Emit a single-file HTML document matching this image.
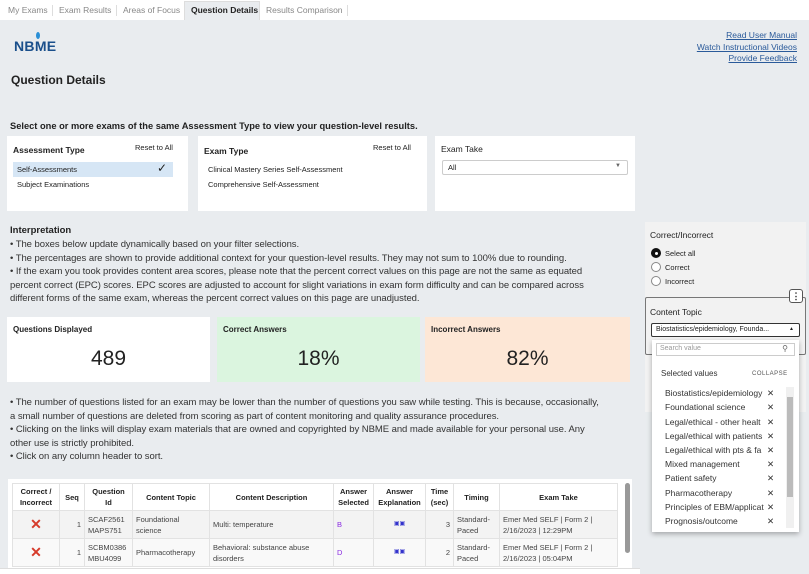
<!DOCTYPE html>
<html><head><meta charset="utf-8"><style>
*{box-sizing:border-box;margin:0;padding:0}
body{width:809px;height:574px;overflow:hidden;background:#e9ecef;font-family:"Liberation Sans",sans-serif;color:#222;position:relative;font-size:9px}
.a{position:absolute;white-space:nowrap}
.tabs{position:absolute;left:0;top:0;width:809px;height:20px;background:#fff}
.tab{position:absolute;top:5px;font-size:8.5px;color:#888}
.sep{position:absolute;top:5px;width:1px;height:11px;background:#ddd}
.box{position:absolute;background:#fff}
a{color:#2a5a9a;text-decoration:underline}
table{border-collapse:collapse;font-size:7.5px;table-layout:fixed}
td,th{border:1px solid #e2e2e2;padding:2px 3px;vertical-align:middle;overflow:hidden}
th{font-weight:bold;text-align:center;height:27px;line-height:11px}
td{height:28px;line-height:11px;color:#444}
.x{color:#d63b2b;font-size:14px;font-weight:bold;text-align:center}
.li{position:absolute;left:665px;font-size:8.5px;color:#333;white-space:nowrap}
.li span{position:absolute;left:102px}
.txt{font-size:9.5px;line-height:13.5px;color:#333;letter-spacing:-0.05px}
</style></head><body>
<div class="tabs">
<div class="tab" style="left:8px">My Exams</div><div class="sep" style="left:52px"></div>
<div class="tab" style="left:59px">Exam Results</div><div class="sep" style="left:116px"></div>
<div class="tab" style="left:123px">Areas of Focus</div>
<div style="position:absolute;left:184px;top:1px;width:76px;height:19px;background:#e9ecef;border:1px solid #ddd;border-bottom:none"></div>
<div class="tab" style="left:191px;color:#222;font-weight:bold">Question Details</div>
<div class="tab" style="left:266px">Results Comparison</div><div class="sep" style="left:347px"></div>
</div>
<div class="a" style="left:14px;top:38px;font-size:14px;font-weight:bold;color:#1a4f8b;letter-spacing:0.3px">NBME</div>
<div class="a" style="left:36px;top:32px;width:4px;height:7px;background:#2a8fd6;border-radius:50%"></div>
<div class="a" style="right:12px;top:30px;font-size:8.5px;text-align:right;line-height:11.5px"><a>Read User Manual</a><br><a>Watch Instructional Videos</a><br><a>Provide Feedback</a></div>
<div class="a" style="left:11px;top:73px;font-size:12px;font-weight:bold">Question Details</div>
<div class="a" style="left:10px;top:121px;font-size:9.3px;font-weight:bold">Select one or more exams of the same Assessment Type to view your question-level results.</div>

<div class="box" style="left:7px;top:136px;width:181px;height:75px">
<div class="a" style="left:6px;top:9px;font-weight:bold;font-size:8.5px">Assessment Type</div>
<div class="a" style="left:128px;top:7px;font-size:7.5px">Reset to All</div>
<div class="a" style="left:6px;top:26px;width:160px;height:15px;background:#d6e6f5"></div>
<div class="a" style="left:10px;top:29px;font-size:7.5px">Self-Assessments</div>
<div class="a" style="left:150px;top:25px;font-size:12px">✓</div>
<div class="a" style="left:10px;top:44px;font-size:7.5px">Subject Examinations</div>
</div>
<div class="box" style="left:198px;top:136px;width:229px;height:75px">
<div class="a" style="left:6px;top:10px;font-weight:bold;font-size:8.5px">Exam Type</div>
<div class="a" style="left:175px;top:7px;font-size:7.5px">Reset to All</div>
<div class="a" style="left:10px;top:29px;font-size:7.5px">Clinical Mastery Series Self-Assessment</div>
<div class="a" style="left:10px;top:44px;font-size:7.5px">Comprehensive Self-Assessment</div>
</div>
<div class="box" style="left:435px;top:136px;width:200px;height:75px">
<div class="a" style="left:6px;top:8px;font-size:8.5px">Exam Take</div>
<div class="a" style="left:7px;top:24px;width:186px;height:15px;border:1px solid #ccc;border-radius:2px;font-size:7.5px;padding:2px 5px">All<span style="position:absolute;right:6px;top:2px;font-size:6px;color:#666">▼</span></div>
</div>

<div class="a" style="left:10px;top:225px;font-weight:bold;font-size:9.5px">Interpretation</div>
<div class="a txt" style="left:10px;top:238px">• The boxes below update dynamically based on your filter selections.<br>• The percentages are shown to provide additional context for your question-level results. They may not sum to 100% due to rounding.<br>• If the exam you took provides content area scores, please note that the percent correct values on this page are not the same as equated<br>percent correct (EPC) scores. EPC scores are adjusted to account for slight variations in exam form difficulty and can be compared across<br>different forms of the same exam, whereas the percent correct values on this page are unadjusted.</div>

<div class="box" style="left:7px;top:317px;width:203px;height:65px"><div class="a" style="left:6px;top:8px;font-size:8px;font-weight:bold">Questions Displayed</div><div class="a" style="left:0;width:203px;text-align:center;top:30px;font-size:21px">489</div></div>
<div class="box" style="left:217px;top:317px;width:203px;height:65px;background:#dbf5df"><div class="a" style="left:6px;top:8px;font-size:8px;font-weight:bold">Correct Answers</div><div class="a" style="left:0;width:203px;text-align:center;top:30px;font-size:21px">18%</div></div>
<div class="box" style="left:425px;top:317px;width:205px;height:65px;background:#fde7d6"><div class="a" style="left:6px;top:8px;font-size:8px;font-weight:bold">Incorrect Answers</div><div class="a" style="left:0;width:205px;text-align:center;top:30px;font-size:21px">82%</div></div>

<div class="a txt" style="left:10px;top:396px">• The number of questions listed for an exam may be lower than the number of questions you saw while testing. This is because, occasionally,<br>a small number of questions are deleted from scoring as part of content monitoring and quality assurance procedures.<br>• Clicking on the links will display exam materials that are owned and copyrighted by NBME and made available for your personal use. Any<br>other use is strictly prohibited.<br>• Click on any column header to sort.</div>

<div class="box" style="left:8px;top:479px;width:624px;height:95px;padding:4px 0 0 4px">
<table style="width:606px">
<colgroup><col style="width:47px"><col style="width:25px"><col style="width:48px"><col style="width:77px"><col style="width:124px"><col style="width:40px"><col style="width:52px"><col style="width:28px"><col style="width:46px"><col></colgroup>
<tr><th>Correct /<br>Incorrect</th><th>Seq</th><th>Question<br>Id</th><th>Content Topic</th><th>Content Description</th><th>Answer<br>Selected</th><th>Answer<br>Explanation</th><th>Time<br>(sec)</th><th>Timing</th><th>Exam Take</th></tr>
<tr style="background:#f3f3f3"><td class="x">✕</td><td style="text-align:right">1</td><td>SCAF2561<br>MAPS751</td><td>Foundational<br>science</td><td>Multi: temperature</td><td style="color:#8a2be2">B</td><td style="text-align:center;color:#33c;font-size:6px">▣▣</td><td style="text-align:right">3</td><td>Standard-<br>Paced</td><td>Emer Med SELF | Form 2 |<br>2/16/2023 | 12:29PM</td></tr>
<tr style="background:#f9f9f9"><td class="x">✕</td><td style="text-align:right">1</td><td>SCBM0386<br>MBU4099</td><td>Pharmacotherapy</td><td>Behavioral: substance abuse<br>disorders</td><td style="color:#8a2be2">D</td><td style="text-align:center;color:#33c;font-size:6px">▣▣</td><td style="text-align:right">2</td><td>Standard-<br>Paced</td><td>Emer Med SELF | Form 2 |<br>2/16/2023 | 05:04PM</td></tr>
</table>
<div class="a" style="left:617px;top:4px;width:5px;height:70px;background:#999;border-radius:3px"></div>
</div>
<div class="a" style="left:0;top:568px;width:640px;height:6px;background:#fff;border-top:1px solid #ddd"></div>

<div class="a" style="left:645px;top:222px;width:161px;height:190px;background:#f2f2f2"></div>
<div class="a" style="left:650px;top:230px;font-size:8.5px">Correct/Incorrect</div>
<div class="a" style="left:651px;top:248px;width:10px;height:10px;border-radius:50%;background:#111"><div style="position:absolute;left:3.5px;top:3.5px;width:3px;height:3px;background:#fff;border-radius:50%"></div></div>
<div class="a" style="left:665px;top:249px;font-size:7.5px">Select all</div>
<div class="a" style="left:651px;top:262px;width:10px;height:10px;border-radius:50%;border:1px solid #888;background:#fff"></div>
<div class="a" style="left:665px;top:263px;font-size:7.5px">Correct</div>
<div class="a" style="left:651px;top:276px;width:10px;height:10px;border-radius:50%;border:1px solid #888;background:#fff"></div>
<div class="a" style="left:665px;top:277px;font-size:7.5px">Incorrect</div>
<div class="a" style="left:645px;top:297px;width:161px;height:58px;border:1px solid #777;border-radius:2px"></div>
<div class="a" style="left:789px;top:289px;width:14px;height:14px;border:1px solid #555;border-radius:3px;background:#fff;font-size:9px;font-weight:bold;text-align:center;line-height:12px">⋮</div>
<div class="a" style="left:650px;top:307px;font-size:8.5px">Content Topic</div>
<div class="a" style="left:651px;top:323px;width:149px;height:14px;border:1px solid #333;border-radius:2px;background:#fff;font-size:7px;padding:2px 4px">Biostatistics/epidemiology, Founda...<span style="position:absolute;right:5px;top:2px;font-size:5px">▲</span></div>
<div class="a" style="left:652px;top:340px;width:147px;height:192px;background:#fff;box-shadow:0 2px 5px rgba(0,0,0,.3)"></div>
<div class="a" style="left:656px;top:343px;width:139px;height:13px;border:1px solid #ccc;font-size:7px;color:#999;padding:1px 3px">Search value<span style="position:absolute;right:6px;top:0;font-size:8px;color:#666">⚲</span></div>
<div class="a" style="left:661px;top:369px;font-size:8px;color:#333">Selected values</div>
<div class="a" style="left:752px;top:371px;font-size:6px;color:#555;letter-spacing:.5px">COLLAPSE</div>
<div class="a" style="left:786px;top:387px;width:8px;height:141px;background:#f0f0f0"></div>
<div class="a" style="left:787px;top:397px;width:6px;height:100px;background:#bbb"></div>
<div class="li" style="top:388px">Biostatistics/epidemiology<span>✕</span></div>
<div class="li" style="top:402px">Foundational science<span>✕</span></div>
<div class="li" style="top:417px">Legal/ethical - other healt<span>✕</span></div>
<div class="li" style="top:431px">Legal/ethical with patients<span>✕</span></div>
<div class="li" style="top:445px">Legal/ethical with pts &amp; fa<span>✕</span></div>
<div class="li" style="top:459px">Mixed management<span>✕</span></div>
<div class="li" style="top:473px">Patient safety<span>✕</span></div>
<div class="li" style="top:488px">Pharmacotherapy<span>✕</span></div>
<div class="li" style="top:502px">Principles of EBM/applicat<span>✕</span></div>
<div class="li" style="top:516px">Prognosis/outcome<span>✕</span></div>
</body></html>
